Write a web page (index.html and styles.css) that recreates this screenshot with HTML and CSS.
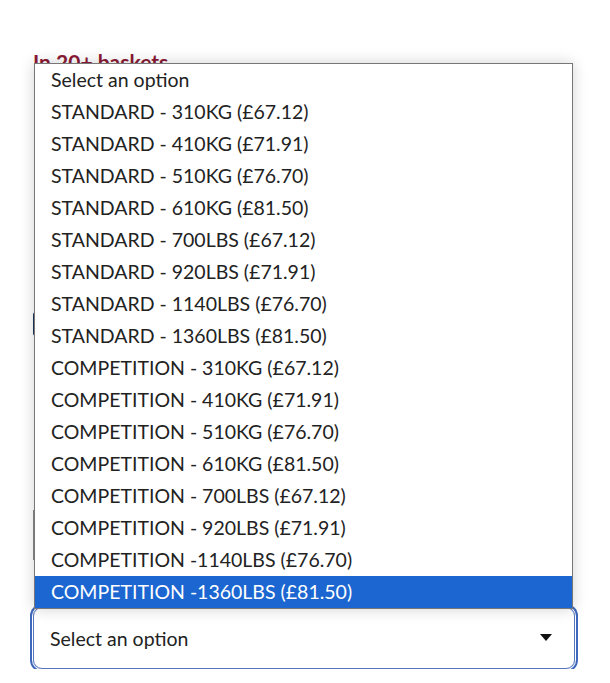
FILE: index.html
```html
<!DOCTYPE html>
<html lang="en">
<head>
  <meta charset="UTF-8" />
  <meta name="viewport" content="width=device-width, initial-scale=1.0" />
  <title>Choose an option</title>
  <link rel="stylesheet" href="styles.css">
</head>
<body>
  <div class="product">
    <p class="baskets">In 20+ baskets</p>

    <div class="behind">
      <div class="behind-button"></div>
      <div class="behind-field"></div>
    </div>

    <!-- Closed select (focused) -->
    <div class="select">
      <span class="select-value">Select an option</span>
      <svg class="select-arrow" width="12" height="8" viewBox="0 0 12 8">
        <path d="M0 0 H12 L6 7 Z" fill="#111"/>
      </svg>
    </div>
  </div>

  <!-- Open option list -->
  <ul class="options">
    <li>Select an option</li>
    <li>STANDARD - 310KG (£67.12)</li>
    <li>STANDARD - 410KG (£71.91)</li>
    <li>STANDARD - 510KG (£76.70)</li>
    <li>STANDARD - 610KG (£81.50)</li>
    <li>STANDARD - 700LBS (£67.12)</li>
    <li>STANDARD - 920LBS (£71.91)</li>
    <li>STANDARD - 1140LBS (£76.70)</li>
    <li>STANDARD - 1360LBS (£81.50)</li>
    <li>COMPETITION - 310KG (£67.12)</li>
    <li>COMPETITION - 410KG (£71.91)</li>
    <li>COMPETITION - 510KG (£76.70)</li>
    <li>COMPETITION - 610KG (£81.50)</li>
    <li>COMPETITION - 700LBS (£67.12)</li>
    <li>COMPETITION - 920LBS (£71.91)</li>
    <li>COMPETITION -1140LBS (£76.70)</li>
    <li class="selected">COMPETITION -1360LBS (£81.50)</li>
  </ul>
</body>
</html>
```

FILE: styles.css
```css
/* Base styling */
body {
  font-family: Lato, "Open Sans", Arial, sans-serif;
  background-color: #fff;
  color: #222;
  margin: 0;
  padding: 0;
}
.product {
  padding: 50px 33px 0 31px;
}
.baskets {
  margin: 0;
  font-size: 21px;
  font-weight: 700;
  color: #8a1a36;
  line-height: 24px;
  padding-left: 2px;
}
/* Page parts hidden under the list */
.behind {
  height: 533px;
  display: flex;
  flex-direction: column;
  padding-left: 2px;
}
.behind-button {
  margin-top: 238px;
  width: 6px;
  height: 24px;
  background: #1d3557;
  border-radius: 3px 0 0 3px;
}
.behind-field {
  margin-top: 174px;
  width: 4px;
  height: 50px;
  border-left: 2px solid #888;
}
/* Select box */
.select {
  height: 60px;
  display: flex;
  align-items: center;
  justify-content: space-between;
  padding: 0 22px 0 16px;
  border: 1px solid #5576bd;
  border-radius: 9px;
  box-shadow: 0 0 0 1px #fff, 0 0 0 3px #3d68bb;
  margin: 0 2px;
  font-size: 19.5px;
  color: #222;
}
/* Option list */
.options {
  position: absolute;
  top: 63px;
  left: 34px;
  width: 537px;
  margin: 0;
  padding: 0;
  list-style: none;
  background: #fff;
  border: 1px solid #777;
  box-shadow: 0 0 14px rgba(0, 0, 0, 0.18);
}
.options li {
  height: 32px;
  line-height: 32px;
  padding-left: 16px;
  font-size: 19.5px;
  color: #222;
}
.options li.selected {
  background: #1b66d0;
  color: #fff;
}
```
